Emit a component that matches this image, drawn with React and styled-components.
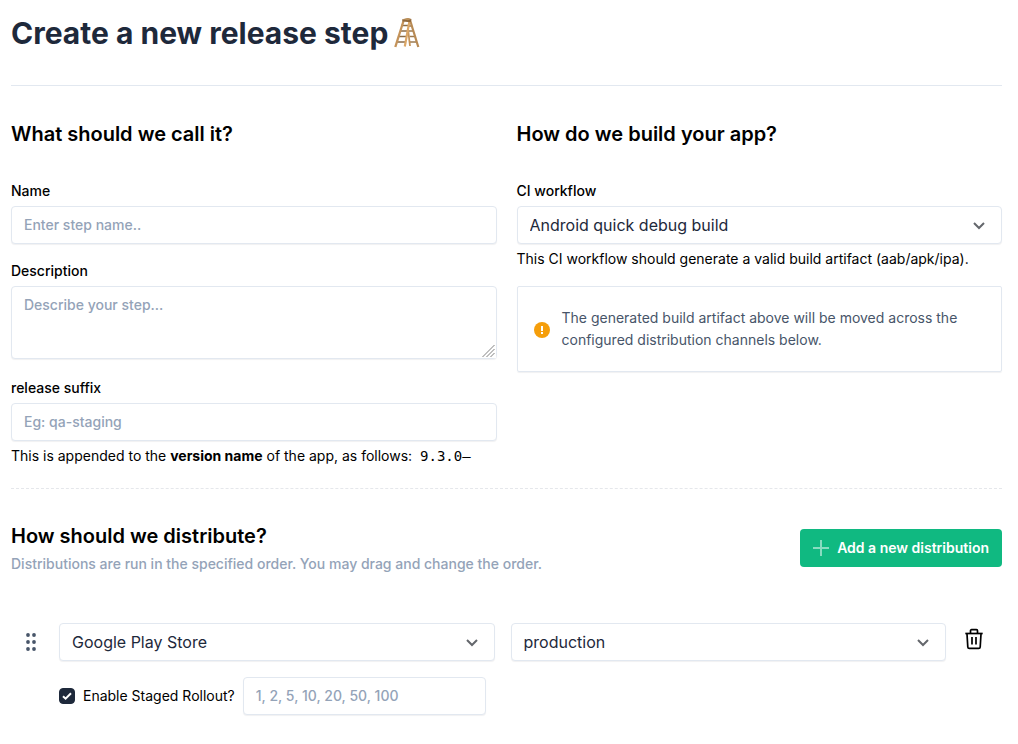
import React from "react";
import styled, { createGlobalStyle } from "styled-components";

const GlobalStyle = createGlobalStyle`
  *, *::before, *::after { box-sizing: border-box; }
  body {
    margin: 0;
    background: #fff;
    color: #000;
    font-family: Inter, "Liberation Sans", sans-serif;
    font-size: 14px;
    line-height: 22px;
    -webkit-font-smoothing: antialiased;
  }
  h1, h2, p { margin: 0; }
  input, select, textarea, button { font-family: inherit; margin: 0; }
`;

const Page = styled.main`
  padding: 13px 16px 28px 11px;
`;

const Header = styled.header`
  padding-bottom: 32px;
  border-bottom: 1px solid #e2e8f0;
`;

const Title = styled.h1`
  display: flex;
  align-items: center;
  gap: 4px;
  font-size: 30px;
  line-height: 40px;
  font-weight: 700;
  color: #1e293b;
`;

const SectionTitle = styled.h2`
  font-size: 20px;
  line-height: 30px;
  font-weight: 600;
`;

const Columns = styled.div`
  display: grid;
  grid-template-columns: 1fr 1fr;
  gap: 20px;
  padding: 33px 0 21px;
  border-bottom: 1px dashed #e5e7eb;
`;

const Fields = styled.div`
  display: flex;
  flex-direction: column;
  gap: 16px;
  margin-top: 31px;
`;

const Field = styled.div`
  display: flex;
  flex-direction: column;
  gap: 4px;
`;

const Label = styled.label`
  font-weight: 500;
`;

const control = `
  display: block;
  width: 100%;
  border: 1px solid #e2e8f0;
  border-radius: 4px;
  background: #fff;
  color: #1e293b;
  box-shadow: 0 1px 1px rgba(15, 23, 42, 0.06);
`;

const TextInput = styled.input`
  ${control}
  width: ${(p) => p.$width || "100%"};
  height: 38px;
  padding: 7px 12px 9px;
  font-size: 14px;
  line-height: 20px;
  font-weight: 500;
  &::placeholder { color: #94a3b8; opacity: 1; }
`;

const TextAreaBox = styled.div`
  display: grid;
  margin-bottom: 2px;
  > * { grid-area: 1 / 1; }
  > svg {
    place-self: end;
    margin: 1px;
    pointer-events: none;
  }
`;

const TextArea = styled.textarea`
  ${control}
  height: 73px;
  padding: 8px 12px;
  font-size: 14px;
  line-height: 20px;
  font-weight: 500;
  resize: vertical;
  &::placeholder { color: #94a3b8; opacity: 1; }
  &::-webkit-resizer { background: transparent; }
`;

const SelectBox = styled.div`
  display: grid;
  align-items: center;
  min-width: 0;
  > * { grid-area: 1 / 1; }
  > svg {
    justify-self: end;
    margin-right: 16px;
    pointer-events: none;
  }
`;

const Select = styled.select`
  ${control}
  height: 38px;
  padding: 0 40px 0 12px;
  font-size: 16px;
  line-height: 24px;
  appearance: none;
`;

const Version = styled.code`
  margin-left: 4px;
  font-family: "DejaVu Sans Mono", monospace;
  font-size: 14px;
`;

const Notice = styled.div`
  display: flex;
  align-items: center;
  gap: 12px;
  padding: 20px 16px;
  border: 1px solid #e2e8f0;
  border-radius: 2px;
  box-shadow: 0 1px 1px rgba(15, 23, 42, 0.06);
  color: #475569;
  > svg {
    flex: none;
    margin-top: 2px;
  }
`;

const DistributionHeader = styled.div`
  display: flex;
  justify-content: space-between;
  align-items: center;
  padding: 32px 0 48px;
`;

const Subtitle = styled.p`
  margin-top: 2px;
  font-weight: 500;
  color: #94a3b8;
`;

const AddButton = styled.button`
  display: flex;
  align-items: center;
  gap: 8px;
  height: 38px;
  padding: 0 13px;
  border: 0;
  border-radius: 4px;
  background: #10b981;
  color: #fff;
  font-size: 14px;
  line-height: 20px;
  font-weight: 600;
`;

const Distribution = styled.div`
  display: grid;
  grid-template-columns: 40px 1fr 40px;
  column-gap: 8px;
  row-gap: 16px;
  padding-right: 8px;
`;

const DragHandle = styled.button`
  display: flex;
  align-items: center;
  justify-content: center;
  padding: 0;
  border: 0;
  background: none;
  color: #475569;
  cursor: grab;
`;

const Channels = styled.div`
  display: grid;
  grid-template-columns: 1fr 1fr;
  gap: 16px;
`;

const DeleteButton = styled.button`
  display: flex;
  justify-content: center;
  padding: 5px 0 0;
  border: 0;
  background: none;
  color: #000;
`;

const Rollout = styled.div`
  grid-column: 2;
  display: flex;
  align-items: center;
  gap: 8px;
`;

const CheckLabel = styled.label`
  display: flex;
  align-items: center;
  gap: 8px;
`;

const CheckWrap = styled.span`
  display: grid;
  > * { grid-area: 1 / 1; }
  > svg { pointer-events: none; }
`;

const Checkbox = styled.input`
  width: 16px;
  height: 16px;
  appearance: none;
  border: 1px solid #1e293b;
  border-radius: 4px;
  background: #fff;
  &:checked { background: #1e293b; }
`;

const Ladder = () => (
  <svg width="30" height="32" viewBox="0 0 30 32" fill="none" aria-hidden="true">
    <path d="M17 9h3M17 14h5M17.500 19.500h6M18 25h7" stroke="#9b7a50" strokeWidth="1.700" />
    <path d="M18 3 26.300 30" stroke="#b88a54" strokeWidth="2.200" />
    <path d="M16 12 18 29" stroke="#c4935a" strokeWidth="1.800" />
    <path d="M9 8.500h7M8 14h7.500M6 19.500h8M5 25h8.500" stroke="#8a6c48" strokeWidth="1.700" />
    <path d="M11.500 4 3.300 30" stroke="#c4935a" strokeWidth="2.300" />
    <path d="M17.300 5 12.800 29.500" stroke="#dca767" strokeWidth="2.200" />
    <path d="m10 2.500 6-1.300 3.500 1-.8 3-8.200-.7z" fill="#8f683d" />
    <path d="m10 2.300 6-1.300 3.500 1-3.500 1.200z" fill="#bd915b" />
  </svg>
);

const Chevron = () => (
  <svg width="14" height="14" viewBox="0 0 14 14" fill="none" stroke="#64676c" strokeWidth="2" aria-hidden="true">
    <path d="m2 5 5 5 5-5" />
  </svg>
);

const Grip = () => (
  <svg width="14" height="14" viewBox="0 0 14 14" stroke="#808080" aria-hidden="true">
    <path d="M0 0h14v14H0z" fill="#fff" stroke="none" />
    <path d="M.5 13 12.500 1M4.500 13l8-8M8.500 13l4-4" />
  </svg>
);

const Dropdown = ({ options, ...rest }) => (
  <SelectBox>
    <Select {...rest}>
      {options.map((o) => (
        <option key={o}>{o}</option>
      ))}
    </Select>
    <Chevron />
  </SelectBox>
);

export default function App() {
  return (
    <>
      <GlobalStyle />
      <Page>
        <Header>
          <Title>
            Create a new release step
            <Ladder />
          </Title>
        </Header>

        <Columns>
          <section>
            <SectionTitle>What should we call it?</SectionTitle>
            <Fields>
              <Field>
                <Label htmlFor="name">Name</Label>
                <TextInput id="name" placeholder="Enter step name.." />
              </Field>
              <Field>
                <Label htmlFor="description">Description</Label>
                <TextAreaBox>
                  <TextArea id="description" placeholder="Describe your step..." />
                  <Grip />
                </TextAreaBox>
              </Field>
              <Field>
                <Label htmlFor="suffix">release suffix</Label>
                <TextInput id="suffix" placeholder="Eg: qa-staging" />
                <p>
                  This is appended to the <b>version name</b> of the app, as follows:{" "}
                  <Version>9.3.0–</Version>
                </p>
              </Field>
            </Fields>
          </section>

          <section>
            <SectionTitle>How do we build your app?</SectionTitle>
            <Fields>
              <Field>
                <Label htmlFor="workflow">CI workflow</Label>
                <Dropdown id="workflow" options={["Android quick debug build"]} />
                <p>This CI workflow should generate a valid build artifact (aab/apk/ipa).</p>
              </Field>
              <Notice>
                <svg width="16" height="16" viewBox="0 0 16 16" aria-hidden="true">
                  <circle cx="8" cy="8" r="8" fill="#f59e0b" />
                  <path d="M7 4h2v5H7zM7 10h2v2H7z" fill="#fff" />
                </svg>
                <p>
                  The generated build artifact above will be moved across the configured
                  distribution channels below.
                </p>
              </Notice>
            </Fields>
          </section>
        </Columns>

        <section>
          <DistributionHeader>
            <div>
              <SectionTitle>How should we distribute?</SectionTitle>
              <Subtitle>
                Distributions are run in the specified order. You may drag and change the order.
              </Subtitle>
            </div>
            <AddButton type="button">
              <svg width="16" height="16" viewBox="0 0 16 16" fill="none" stroke="#fff" strokeOpacity="0.5" strokeWidth="2" aria-hidden="true">
                <path d="M8 0v16M0 8h16" />
              </svg>
              Add a new distribution
            </AddButton>
          </DistributionHeader>

          <Distribution>
            <DragHandle type="button" aria-label="Drag to reorder">
              <svg width="12" height="20" viewBox="0 0 12 20" fill="currentColor" aria-hidden="true">
                {[3, 10, 17].map((y) => (
                  <g key={y}>
                    <circle cx="3" cy={y} r="1.900" />
                    <circle cx="9" cy={y} r="1.900" />
                  </g>
                ))}
              </svg>
            </DragHandle>
            <Channels>
              <Dropdown aria-label="Store" options={["Google Play Store"]} />
              <Dropdown aria-label="Track" options={["production"]} />
            </Channels>
            <DeleteButton type="button" aria-label="Delete distribution">
              <svg width="20" height="22" viewBox="0 0 20 22" fill="none" stroke="currentColor" strokeWidth="1.700" aria-hidden="true">
                <path d="M1.300 5.500h17.400" />
                <path d="M6.500 5V2.700a1 1 0 0 1 1-1h5a1 1 0 0 1 1 1V5" />
                <path d="m3 6 .8 13a1.500 1.500 0 0 0 1.500 1.400h9.400a1.500 1.500 0 0 0 1.500-1.400L17 6" />
                <path d="M8 9v7.500M12 9v7.500" />
              </svg>
            </DeleteButton>
            <Rollout>
              <CheckLabel>
                <CheckWrap>
                  <Checkbox type="checkbox" defaultChecked />
                  <svg width="16" height="16" viewBox="0 0 16 16" fill="none" stroke="#fff" strokeWidth="2" aria-hidden="true">
                    <path d="m4 8.200 2.600 2.500L12 5.300" />
                  </svg>
                </CheckWrap>
                Enable Staged Rollout?
              </CheckLabel>
              <TextInput $width="243px" aria-label="Rollout stages" placeholder="1, 2, 5, 10, 20, 50, 100" />
            </Rollout>
          </Distribution>
        </section>
      </Page>
    </>
  );
}
